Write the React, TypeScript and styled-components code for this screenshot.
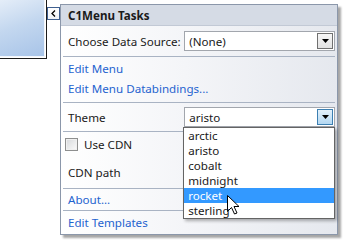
import React from 'react';
import styled, { createGlobalStyle, css } from 'styled-components';

const GlobalStyle = createGlobalStyle`
  html, body {
    margin: 0;
    padding: 0;
    background: #ffffff;
  }
  body {
    font-family: 'Noto Sans', 'Open Sans', sans-serif;
    font-size: 11.6px;
    color: #1a1a1a;
  }
`;

const THEMES = ['arctic', 'aristo', 'cobalt', 'midnight', 'rocket', 'sterling'];

const Surface = styled.div`
  display: flex;
  align-items: flex-start;
  width: 352px;
  height: 245px;
  overflow: hidden;
`;

const Control = styled.div`
  width: 46px;
  height: 58px;
  border-right: 1px solid #1b1b1b;
  border-bottom: 1px solid #1b1b1b;
  box-sizing: content-box;
  display: flex;
`;

const ControlFill = styled.div`
  flex: 1;
  margin: 0 1px 1px 0;
  border-right: 1px solid #f2f6fb;
  border-bottom: 1px solid #f2f6fb;
  background: linear-gradient(160deg, #e4edf8 0%, #c3d7ef 45%, #a8c4e8 100%);
`;

const GlyphButton = styled.div`
  width: 11px;
  height: 11px;
  margin-top: 7px;
  border: 1px solid #3f5f8f;
  background: linear-gradient(#ffffff, #eef2f7);
  display: flex;
  align-items: center;
  justify-content: center;
`;

const Panel = styled.div`
  width: 276px;
  margin-top: 4px;
  border: 1px solid #8b97aa;
  box-shadow: 3px 3px 2px rgba(0, 0, 0, 0.35);
  display: flex;
  flex-direction: column;
`;

const Header = styled.div`
  height: 20px;
  padding-left: 7px;
  display: flex;
  align-items: center;
  background: #d5dbe5;
  border-bottom: 1px solid #c2c9d5;
  font-weight: 700;
  color: #1a1a1a;
`;

const Body = styled.div`
  display: flex;
  flex-direction: column;
  background: linear-gradient(90deg, #ffffff 0%, #f4f5f8 45%, #e5e8ee 100%);
`;

const Row = styled.div<{ h: number }>`
  height: ${({ h }) => h}px;
  padding: 0 2px 0 7px;
  display: flex;
  align-items: center;
`;

const Label = styled.span`
  width: 118px;
  white-space: nowrap;
`;

const LinkGroup = styled.div`
  display: flex;
  flex-direction: column;
  padding: 1px 0 4px;
`;

const Link = styled.a<{ h: number }>`
  height: ${({ h }) => h}px;
  padding-left: 7px;
  display: flex;
  align-items: center;
  color: #1f63cf;
  text-decoration: none;
  cursor: pointer;
`;

const Divider = styled.div`
  height: 1px;
  margin: 0 2px;
  background: #a9b3c3;
`;

const Combo = styled.div`
  position: relative;
  width: 147px;
  height: 18px;
  border: 1px solid #a2a6ad;
  background: #ffffff;
  display: flex;
  align-items: center;
  padding-left: 4px;
  box-sizing: content-box;
`;

const ComboText = styled.span`
  flex: 1;
`;

const DropButton = styled.div<{ hot?: boolean }>`
  width: 14px;
  height: 14px;
  margin-right: 1px;
  display: flex;
  align-items: center;
  justify-content: center;
  ${({ hot }) =>
    hot
      ? css`
          border: 1px solid #3c7fb1;
          background: linear-gradient(#e3f1fb, #b4d8f2);
        `
      : css`
          border: 1px solid #707070;
          background: linear-gradient(#f6f6f6, #e2e2e2);
        `}
`;

const List = styled.ul`
  position: absolute;
  top: 19px;
  left: -2px;
  width: 150px;
  margin: 0;
  padding: 0;
  list-style: none;
  background: #ffffff;
  border: 1px solid #646464;
  box-shadow: 2px 2px 3px rgba(0, 0, 0, 0.3);
  z-index: 5;
`;

const Item = styled.li<{ selected?: boolean }>`
  position: relative;
  height: 15px;
  line-height: 15px;
  padding-left: 4px;
  ${({ selected }) =>
    selected &&
    css`
      background: #3399ff;
      color: #ffffff;
    `}
`;

const Pointer = styled.svg`
  position: absolute;
  left: 43px;
  top: 7px;
`;

const CheckRow = styled.label`
  height: 24px;
  padding-left: 4px;
  display: flex;
  align-items: center;
  gap: 6px;
`;

const CheckBox = styled.span`
  width: 11px;
  height: 11px;
  border: 1px solid #8e8f8f;
  background: linear-gradient(135deg, #d6d8db, #fbfbfb);
  box-shadow: inset 0 0 0 1px #f0f0f0;
  box-sizing: content-box;
`;

const Arrow = () => (
  <svg width="7" height="4" viewBox="0 0 7 4">
    <path d="M0 0h7L3.5 4z" fill="#000" />
  </svg>
);

export default function App() {
  return (
    <>
      <GlobalStyle />
      <Surface>
        <Control>
          <ControlFill />
        </Control>
        <GlyphButton>
          <svg width="5" height="7" viewBox="0 0 5 7">
            <path d="M4 0.5L1 3.5L4 6.5" fill="none" stroke="#000" strokeWidth="1.3" />
          </svg>
        </GlyphButton>
        <Panel>
          <Header>C1Menu Tasks</Header>
          <Body>
            <Row h={30}>
              <Label>Choose Data Source:</Label>
              <Combo>
                <ComboText>(None)</ComboText>
                <DropButton>
                  <Arrow />
                </DropButton>
              </Combo>
            </Row>
            <Divider />
            <LinkGroup>
              <Link h={20}>Edit Menu</Link>
              <Link h={20}>Edit Menu Databindings...</Link>
            </LinkGroup>
            <Divider />
            <Row h={28}>
              <Label>Theme</Label>
              <Combo>
                <ComboText>aristo</ComboText>
                <DropButton hot>
                  <Arrow />
                </DropButton>
                <List>
                  {THEMES.map(t => (
                    <Item key={t} selected={t === 'rocket'}>
                      {t}
                      {t === 'rocket' ? (
                        <Pointer width="13" height="20" viewBox="0 0 13 20">
                          <path
                            d="M0.5 0.5V16.5L4.5 12.5L7.5 19L10 18L7 11.5H12Z"
                            fill="#ffffff"
                            stroke="#000000"
                            strokeWidth="1"
                            strokeLinejoin="round"
                          />
                        </Pointer>
                      ) : null}
                    </Item>
                  ))}
                </List>
              </Combo>
            </Row>
            <Divider />
            <CheckRow>
              <CheckBox />
              <span>Use CDN</span>
            </CheckRow>
            <Row h={32}>
              <Label>CDN path</Label>
            </Row>
            <Divider />
            <Link h={21}>About...</Link>
            <Divider />
            <Link h={23}>Edit Templates</Link>
          </Body>
        </Panel>
      </Surface>
    </>
  );
}
